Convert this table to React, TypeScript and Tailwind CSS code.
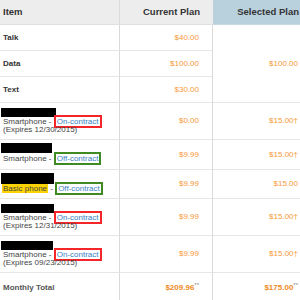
import React from "react";

type Phone = {
  h: number;
  pt: number;
  bh: number;
  bw: number;
  gap: number;
  type: string;
  basic?: boolean;
  on: boolean;
  expires?: string;
  cur: string;
  sel: string;
  dagger: boolean;
};

const phones: Phone[] = [
  { h: 37, pt: 5, bh: 9, bw: 55, gap: 1, type: "Smartphone", on: true, expires: "12/30/2015", cur: "$0.00", sel: "$15.00", dagger: true },
  { h: 30, pt: 3, bh: 10, bw: 51, gap: 2, type: "Smartphone", on: false, cur: "$9.99", sel: "$15.00", dagger: true },
  { h: 29, pt: 3, bh: 11, bw: 53, gap: 1, type: "Basic phone", basic: true, on: false, cur: "$9.99", sel: "$15.00", dagger: false },
  { h: 37, pt: 5, bh: 9, bw: 53, gap: 1, type: "Smartphone", on: true, expires: "12/31/2015", cur: "$9.99", sel: "$15.00", dagger: true },
  { h: 37, pt: 5, bh: 9, bw: 52, gap: 1, type: "Smartphone", on: true, expires: "09/23/2015", cur: "$9.99", sel: "$15.00", dagger: true },
];

const itemCell = "border-r border-b border-r-[#d9d9d9] border-b-[#e6e6e6]";
const curCell = "border-r border-b border-r-[#d9d9d9] border-b-[#e6e6e6] flex items-center justify-end pr-[13px]";
const selCell = "border-b border-b-[#e6e6e6] flex items-center justify-end pr-[13px]";
const price = "text-[8px] leading-[8px] text-[#f7993a]";

export default function App() {
  return (
    <div className="w-[300px] h-[300px] overflow-hidden bg-white font-['Liberation_Sans',Arial,sans-serif]">
      <div className="w-[311px] grid grid-cols-[120px_93px_98px]">
        {/* header */}
        <div className="h-[25px] bg-[#ededed] border-r border-b border-r-[#dcdcdc] border-b-[#e0e0e0] flex items-center pl-[3px]">
          <span className="text-[9.5px] font-bold text-[#333]">Item</span>
        </div>
        <div className="h-[25px] bg-[#ededed] border-b border-b-[#e0e0e0] flex items-center justify-end pr-[13px]">
          <span className="text-[9.5px] font-bold text-[#333]">Current Plan</span>
        </div>
        <div className="h-[25px] bg-[#b9d0dd] border-b border-b-[#c9d9e3] flex items-center justify-end pr-[12px]">
          <span className="text-[9.5px] font-bold text-[#333]">Selected Plan</span>
        </div>

        {/* Talk / Data / Text with merged selected cell */}
        <div className="col-start-1 row-start-2 h-[26px] flex items-center pl-[3px] border-r border-b border-r-[#d9d9d9] border-b-[#e6e6e6]">
          <span className="text-[8px] font-bold text-[#333]">Talk</span>
        </div>
        <div className={`col-start-2 row-start-2 h-[26px] ${curCell}`}>
          <span className={price}>$40.00</span>
        </div>
        <div className="col-start-1 row-start-3 h-[26px] flex items-center pl-[3px] border-r border-b border-r-[#d9d9d9] border-b-[#e6e6e6]">
          <span className="text-[8px] font-bold text-[#333]">Data</span>
        </div>
        <div className={`col-start-2 row-start-3 h-[26px] ${curCell}`}>
          <span className={price}>$100.00</span>
        </div>
        <div className="col-start-1 row-start-4 h-[26px] flex items-center pl-[3px] border-r border-b border-r-[#d9d9d9] border-b-[#e6e6e6]">
          <span className="text-[8px] font-bold text-[#333]">Text</span>
        </div>
        <div className={`col-start-2 row-start-4 h-[26px] ${curCell}`}>
          <span className={price}>$30.00</span>
        </div>
        <div className={`col-start-3 row-start-2 row-span-3 ${selCell}`}>
          <span className={price}>$100.00</span>
        </div>

        {/* phones */}
        {phones.map((p, i) => (
          <React.Fragment key={i}>
            <div className={itemCell} style={{ height: p.h }}>
              <div className="pl-[3px]" style={{ paddingTop: p.pt }}>
                <div className="bg-black ml-[-2px]" style={{ height: p.bh, width: p.bw, marginBottom: p.gap }} />
                <div className="text-[8px] leading-[8px] text-[#444] whitespace-nowrap">
                  {p.basic ? (
                    <span className="bg-[#fdd400] ml-[-1px] pl-[1px] pr-[1px]">{p.type}</span>
                  ) : (
                    <span>{p.type}</span>
                  )}
                  <span> - </span>
                  <span
                    className={`px-[1px] text-[#3b82c4] border-2 ${p.on ? "border-[#f5262a]" : "border-[#3f8a22]"}`}
                  >
                    {p.on ? "On-contract" : "Off-contract"}
                  </span>
                </div>
                {p.expires && (
                  <div className="text-[8px] leading-[8px] text-[#444] whitespace-nowrap">(Expires {p.expires})</div>
                )}
              </div>
            </div>
            <div className={curCell} style={{ height: p.h }}>
              <span className={price}>{p.cur}</span>
            </div>
            <div className={selCell} style={{ height: p.h }}>
              <span className={price}>
                {p.sel}
                {p.dagger && <span>†</span>}
              </span>
            </div>
          </React.Fragment>
        ))}

        {/* total */}
        <div className="h-[30px] border-r border-r-[#d9d9d9] flex items-center pl-[3px]">
          <span className="text-[8px] font-bold text-[#555]">Monthly Total</span>
        </div>
        <div className="h-[30px] border-r border-r-[#d9d9d9] flex items-center justify-end pr-[13px]">
          <span className="text-[8px] font-bold text-[#f08a1e] leading-[8px]">
            $209.96<span className="relative top-[-3px] text-[6px] font-normal text-[#888]">**</span>
          </span>
        </div>
        <div className="h-[30px] flex items-center justify-end pr-[13px]">
          <span className="text-[8px] font-bold text-[#f08a1e] leading-[8px]">
            $175.00<span className="relative top-[-3px] text-[6px] font-normal text-[#888]">**</span>
          </span>
        </div>
      </div>
    </div>
  );
}
